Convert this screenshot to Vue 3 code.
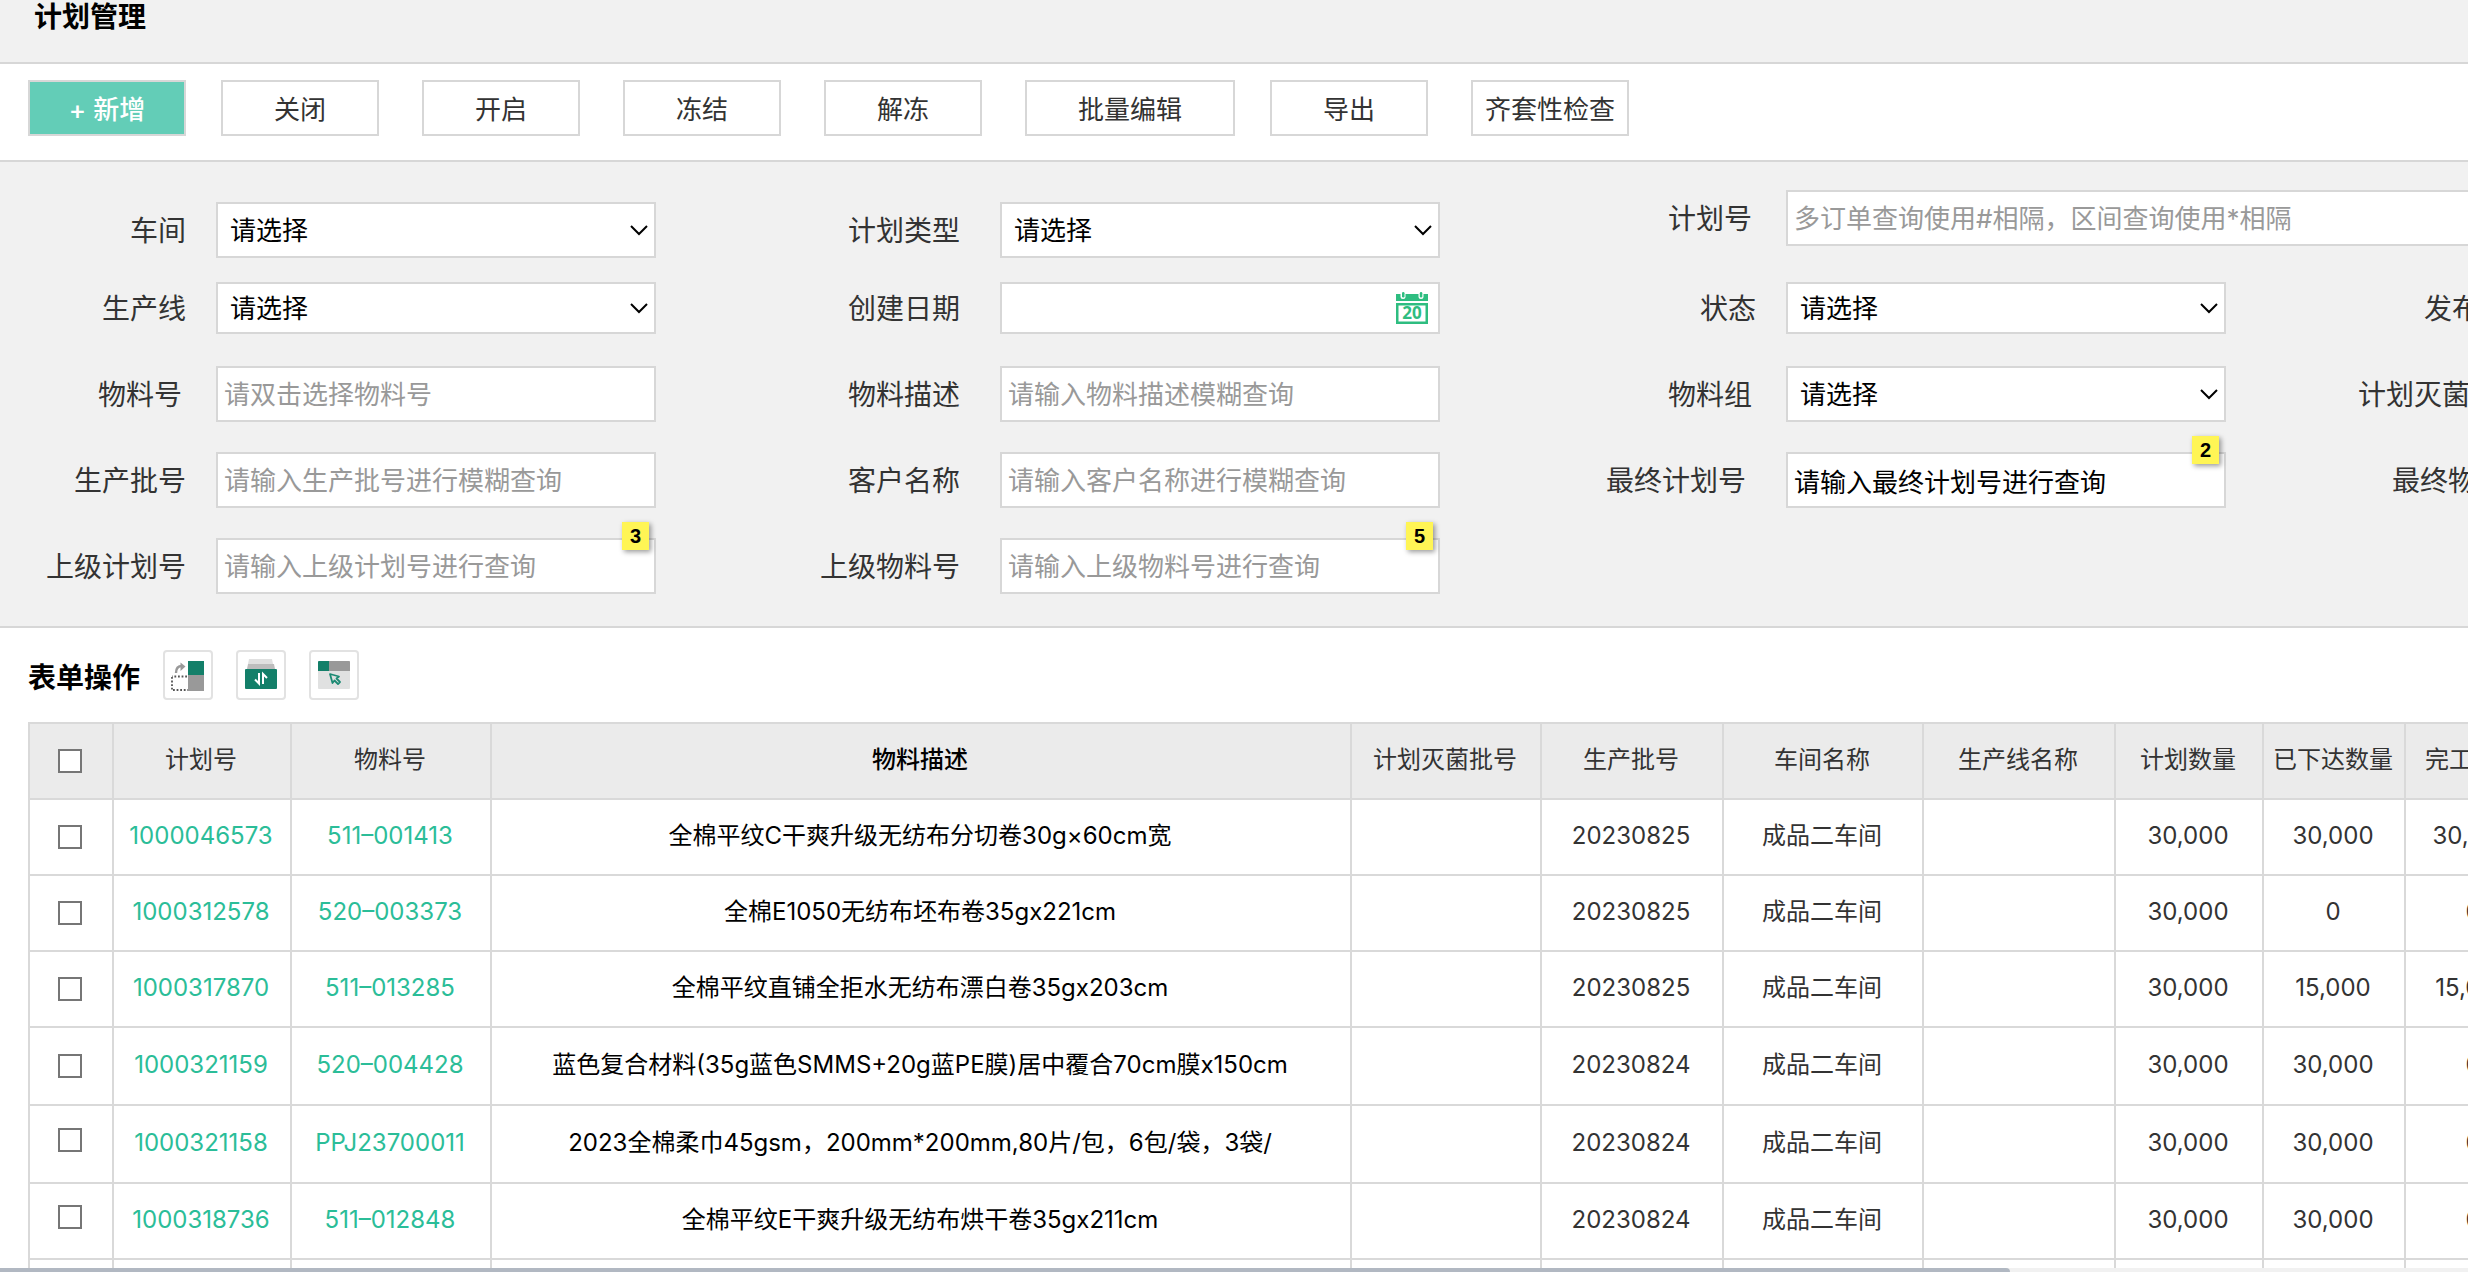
<script setup>
import { ref } from 'vue'

const actions = [
  { text: '+ 新增', kind: 'primary' },
  { text: '关闭', kind: 'after-primary' },
  { text: '开启' },
  { text: '冻结' },
  { text: '解冻' },
  { text: '批量编辑', kind: 'wide' },
  { text: '导出', kind: 'after-wide' },
  { text: '齐套性检查', kind: 'tight' }
]

const fields = [
  { id: 'workshop', label: '车间', type: 'select', col: 1, row: 1 },
  { id: 'plan-type', label: '计划类型', type: 'select', col: 2, row: 1 },
  { id: 'plan-no', label: '计划号', type: 'text', hint: '多订单查询使用#相隔，区间查询使用*相隔', col: 3, row: 1, inset: 's', long: true },
  { id: 'line', label: '生产线', type: 'select', col: 1, row: 2 },
  { id: 'created', label: '创建日期', type: 'date', col: 2, row: 2 },
  { id: 'status', label: '状态', type: 'select', col: 3, row: 2 },
  { id: 'release', label: '发布日期', type: 'none', col: 4, row: 2 },
  { id: 'material', label: '物料号', type: 'text', hint: '请双击选择物料号', col: 1, row: 3, inset: 's' },
  { id: 'material-desc', label: '物料描述', type: 'text', hint: '请输入物料描述模糊查询', col: 2, row: 3 },
  { id: 'material-group', label: '物料组', type: 'select', col: 3, row: 3, inset: 's' },
  { id: 'sterile', label: '计划灭菌批号', type: 'none', col: 4, row: 3, inset: 'm' },
  { id: 'batch', label: '生产批号', type: 'text', hint: '请输入生产批号进行模糊查询', col: 1, row: 4 },
  { id: 'customer', label: '客户名称', type: 'text', hint: '请输入客户名称进行模糊查询', col: 2, row: 4 },
  { id: 'final-plan', label: '最终计划号', type: 'text', value: '请输入最终计划号进行查询', badge: 2, col: 3, row: 4, inset: 'm' },
  { id: 'final-material', label: '最终物料号', type: 'none', col: 4, row: 4, inset: 's' },
  { id: 'parent-plan', label: '上级计划号', type: 'text', hint: '请输入上级计划号进行查询', badge: 3, col: 1, row: 5 },
  { id: 'parent-material', label: '上级物料号', type: 'text', hint: '请输入上级物料号进行查询', badge: 5, col: 2, row: 5 }
]

const rows = ref([
  { plan: '1000046573', material: '511–001413', desc: '全棉平纹C干爽升级无纺布分切卷30g×60cm宽', batch: '20230825', issued: '30,000', done: '30,000' },
  { plan: '1000312578', material: '520–003373', desc: '全棉E1050无纺布坯布卷35gx221cm', batch: '20230825', issued: '0', done: '0' },
  { plan: '1000317870', material: '511–013285', desc: '全棉平纹直铺全拒水无纺布漂白卷35gx203cm', batch: '20230825', issued: '15,000', done: '15,000' },
  { plan: '1000321159', material: '520–004428', desc: '蓝色复合材料(35g蓝色SMMS+20g蓝PE膜)居中覆合70cm膜x150cm', batch: '20230824', issued: '30,000', done: '0', tall: true },
  { plan: '1000321158', material: 'PPJ23700011', desc: '2023全棉柔巾45gsm，200mm*200mm,80片/包，6包/袋，3袋/', batch: '20230824', issued: '30,000', done: '0', tall: true, raised: true },
  { plan: '1000318736', material: '511–012848', desc: '全棉平纹E干爽升级无纺布烘干卷35gx211cm', batch: '20230824', issued: '30,000', done: '0', raised: true }
])
</script>

<template>
  <div class="page">
    <header class="title-bar"><h1>计划管理</h1></header>

    <nav class="toolbar">
      <button v-for="a in actions" :key="a.text" type="button" class="action" :class="a.kind">{{ a.text }}</button>
    </nav>

    <form class="filters" @submit.prevent>
      <div
        v-for="f in fields"
        :key="f.id"
        class="cell"
        :class="['col-' + f.col, 'row-' + f.row, { long: f.long }]"
      >
        <label :for="f.type === 'none' ? null : f.id" :class="f.inset ? 'inset-' + f.inset : ''">{{ f.label }}</label>
        <div v-if="f.type !== 'none'" class="control">
          <template v-if="f.type === 'select'">
            <select :id="f.id"><option>请选择</option></select>
            <svg class="chevron" viewBox="0 0 20 12" aria-hidden="true"><path d="M2 2l8 8 8-8" /></svg>
          </template>
          <template v-else>
            <input :id="f.id" type="text" :placeholder="f.hint" :value="f.value" />
            <svg v-if="f.type === 'date'" class="calendar" viewBox="0 0 32 32" aria-hidden="true">
              <rect x="0" y="2" width="32" height="7" />
              <rect class="ring" x="4.500" y="-1" width="5" height="8" rx="2.500" />
              <rect class="ring" x="22.500" y="-1" width="5" height="8" rx="2.500" />
              <rect x="6" y="0" width="2.500" height="5.500" rx="1.200" />
              <rect x="23.800" y="0" width="2.500" height="5.500" rx="1.200" />
              <path d="M0 11h32v21H0zM2.500 13.500v16h27v-16z" fill-rule="evenodd" />
              <text x="16" y="27" text-anchor="middle">20</text>
            </svg>
          </template>
          <span v-if="f.badge" class="badge">{{ f.badge }}</span>
        </div>
      </div>
    </form>

    <section class="sheet">
      <div class="sheet-head">
        <h2>表单操作</h2>
        <button type="button" class="tool" aria-label="冻结列">
          <svg viewBox="0 0 46 46">
            <rect x="23" y="9" width="16" height="14" fill="#137f69" />
            <rect x="23" y="23" width="16" height="16" fill="#999" />
            <path d="M22 24.500H7M7 25v13M8 38h15" fill="none" stroke="#555" stroke-width="1.800" stroke-dasharray="1.800 1.800" />
            <path d="M11 21c0-5 2-7 6-7" fill="none" stroke="#999" stroke-width="2.400" />
            <path d="M15.500 10.500l5 4-5 4.500z" fill="#999" />
          </svg>
        </button>
        <button type="button" class="tool" aria-label="排序">
          <svg viewBox="0 0 46 46">
            <path d="M11 7h23l1 5H10z" fill="#e0e0e0" />
            <path d="M10 12h26l1 5H9z" fill="#bdbdbd" />
            <rect x="7" y="17" width="32" height="20" rx="1" fill="#137f69" />
            <path d="M21 21v10.500l-4-4M25 32V22l4 4" fill="none" stroke="#fff" stroke-width="2" />
          </svg>
        </button>
        <button type="button" class="tool" aria-label="选择列">
          <svg viewBox="0 0 46 46">
            <rect x="7" y="9" width="32" height="28" rx="1" fill="#e0e1e1" />
            <path d="M7 19v-9a1 1 0 0 1 1-1h10v10z" fill="#137f69" />
            <path d="M18 9h20a1 1 0 0 1 1 1v9H18z" fill="#999" />
            <path d="M19 22l9 2.500-2.500 2 3.500 3.500-2 2-3.500-3.500-2 2.500z" fill="none" stroke="#1c8a73" stroke-width="1.800" stroke-linejoin="round" />
          </svg>
        </button>
      </div>

      <div class="table-wrap">
        <table>
          <colgroup>
            <col class="w-check" /><col class="w-plan" /><col class="w-material" /><col />
            <col class="w-sterile" /><col class="w-batch" /><col class="w-material" /><col class="w-line" />
            <col class="w-qty" /><col class="w-issued" /><col class="w-done" />
          </colgroup>
          <thead>
            <tr>
              <th><input type="checkbox" aria-label="全选" /></th>
              <th>计划号</th>
              <th>物料号</th>
              <th class="desc">物料描述</th>
              <th>计划灭菌批号</th>
              <th>生产批号</th>
              <th>车间名称</th>
              <th>生产线名称</th>
              <th>计划数量</th>
              <th>已下达数量</th>
              <th>完工数量</th>
            </tr>
          </thead>
          <tbody>
            <tr v-for="r in rows" :key="r.plan" :class="{ tall: r.tall, raised: r.raised }">
              <td><input type="checkbox" :aria-label="r.plan" /></td>
              <td><a href="#">{{ r.plan }}</a></td>
              <td><a href="#">{{ r.material }}</a></td>
              <td class="desc">{{ r.desc }}</td>
              <td></td>
              <td>{{ r.batch }}</td>
              <td>成品二车间</td>
              <td></td>
              <td>30,000</td>
              <td>{{ r.issued }}</td>
              <td>{{ r.done }}</td>
            </tr>
            <tr><td v-for="n in 11" :key="n"></td></tr>
          </tbody>
        </table>
      </div>
    </section>

    <div class="scroll-track"><div class="scroll-thumb"></div></div>
  </div>
</template>

<style>
body {
  margin: 0;
  overflow: hidden;
}
</style>

<style scoped>
* {
  box-sizing: border-box;
}

.page {
  display: flex;
  flex-direction: column;
  height: 100vh;
  overflow: hidden;
  background: #fff;
  color: #333;
  font-family: Inter, "Noto Sans CJK SC", sans-serif;
}

button,
input,
select {
  font-family: inherit;
}

.title-bar {
  flex: none;
  height: 64px;
  padding-left: 34px;
  background: #f1f1f1;
  border-bottom: 2px solid #d7d7d7;
}

h1,
h2 {
  margin: 0;
  font-size: 28px;
  line-height: 34px;
  font-weight: 700;
  color: #000;
}

.toolbar {
  flex: none;
  display: flex;
  gap: 43px;
  height: 98px;
  padding: 16px 28px 24px;
  border-bottom: 2px solid #d7d7d7;
}

.action {
  flex: none;
  width: 158px;
  height: 56px;
  padding: 0 0 2px;
  border: 2px solid #d7d7d7;
  background: #fff;
  color: #333;
  font-size: 26px;
}

.action.primary {
  background: #63cdb7;
  color: #fff;
  font-weight: 500;
}

.action.after-primary,
.action.after-wide {
  margin-left: -8px;
}

.action.wide {
  width: 210px;
}

.filters {
  flex: none;
  display: grid;
  grid-template-columns: 656px 784px 786px 310px;
  grid-template-rows: 68px 60px 62px 62px 56px;
  row-gap: 24px;
  align-items: start;
  padding: 28px 0 32px;
  overflow: hidden;
  background: #f1f1f1;
  border-bottom: 2px solid #d7d7d7;
}

.cell {
  display: flex;
  align-items: center;
  height: 56px;
}

.col-1 { grid-column: 1; }
.col-2 { grid-column: 2; }
.col-3 { grid-column: 3; }
.col-4 { grid-column: 4; }
.row-1 { grid-row: 1; align-self: end; }
.row-2 { grid-row: 2; height: 52px; }
.row-3 { grid-row: 3; }
.row-4 { grid-row: 4; }
.row-5 { grid-row: 5; }

.cell.long {
  grid-column: 3 / 5;
  align-self: start;
}

label {
  flex: none;
  margin-right: 30px;
  padding-bottom: 2px;
  font-size: 28px;
  text-align: right;
  white-space: nowrap;
}

.col-1 label { width: 186px; }
.col-2 label { width: 304px; margin-right: 40px; }
.col-3 label { width: 316px; }
.col-4 label { width: 310px; margin-right: 0; }
label.inset-s { padding-right: 4px; }
label.inset-m { padding-right: 10px; }

.control {
  position: relative;
  flex: 1;
  height: 100%;
}

.control input,
.control select {
  display: block;
  width: 100%;
  height: 100%;
  border: 2px solid #d7d7d7;
  border-radius: 0;
  background: #fff;
  color: #000;
  font-size: 26px;
  outline: none;
}

.control input {
  padding: 0 6px;
}

.control input::placeholder {
  color: #999;
  opacity: 1;
}

.control select {
  appearance: none;
  padding: 0 40px 0 12px;
}

.chevron {
  position: absolute;
  top: calc(50% - 6px);
  right: 7px;
  width: 20px;
  height: 12px;
  fill: none;
  stroke: #000;
  stroke-width: 2;
  pointer-events: none;
}

.calendar {
  position: absolute;
  top: 10px;
  right: 12px;
  width: 32px;
  height: 32px;
  fill: #2ebd80;
}

.calendar .ring {
  fill: #fff;
}

.calendar text {
  font: 700 17px "Open Sans", sans-serif;
}

.badge {
  position: absolute;
  top: -16px;
  right: 7px;
  width: 27px;
  height: 28px;
  background: #fff555;
  box-shadow: 2px 2px 5px rgba(0, 0, 0, 0.4);
  color: #000;
  font: 700 20px/28px "Liberation Sans", sans-serif;
  text-align: center;
}

.sheet {
  flex: 1;
  min-height: 0;
  overflow: hidden;
  padding-left: 28px;
}

.sheet-head {
  display: flex;
  align-items: center;
  gap: 23px;
  height: 94px;
}

.sheet-head h2 {
  padding-top: 6px;
}

.tool {
  flex: none;
  width: 50px;
  height: 50px;
  padding: 0;
  border: 2px solid #e2e2e2;
  border-radius: 4px;
  background: #fff;
}

.tool svg {
  display: block;
  width: 46px;
  height: 46px;
}

.table-wrap {
  overflow: hidden;
}

table {
  width: 100%;
  min-width: 2516px;
  table-layout: fixed;
  border-collapse: collapse;
  font-size: 24px;
}

.w-check { width: 84px; }
.w-plan { width: 178px; }
.w-material { width: 200px; }
.w-sterile { width: 190px; }
.w-batch { width: 182px; }
.w-line { width: 192px; }
.w-qty { width: 148px; }
.w-issued { width: 142px; }
.w-done { width: 138px; }

th,
td {
  padding: 0 2px 2px 0;
  border: 2px solid #d9d9d9;
  font-weight: 400;
  line-height: 32px;
  text-align: center;
  white-space: nowrap;
}

th:first-child,
td:first-child {
  padding-bottom: 0;
}

.raised td:first-child {
  padding-bottom: 8px;
}

tr {
  height: 76px;
}

tr.tall {
  height: 78px;
}

th {
  background: #ebebeb;
}

.desc {
  color: #000;
}

th.desc {
  font-weight: 500;
}

a {
  color: #2bbd98;
  text-decoration: none;
}

input[type="checkbox"] {
  appearance: none;
  display: block;
  width: 24px;
  height: 24px;
  margin: 0 auto;
  border: 2px solid #767676;
  background: #fff;
}

.scroll-track {
  flex: none;
  height: 4px;
  background: #f1f1f1;
}

.scroll-thumb {
  width: calc(100% - 458px);
  height: 4px;
  border-top-right-radius: 4px;
  background: #b1b8c2;
}
</style>
